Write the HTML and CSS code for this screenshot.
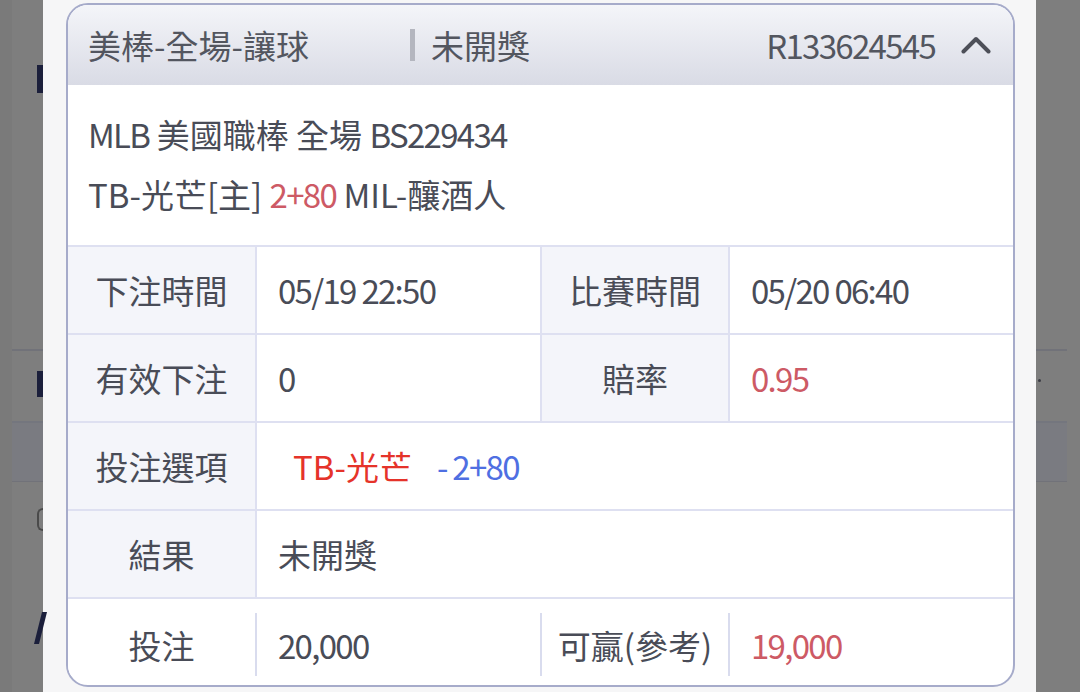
FILE: index.html
```html
<!DOCTYPE html>
<html lang="zh-Hant">
<head>
  <meta charset="UTF-8" />
  <meta name="viewport" content="width=device-width, initial-scale=1.0"/>
  <title>注單詳情</title>
  <link rel="stylesheet" href="styles.css">
</head>
<body>

  <div class="screen">
    <div class="dim dim-left">
      <i class="frag frag-a"></i>
      <i class="frag frag-b"></i>
      <i class="frag frag-c"></i>
      <i class="frag frag-d"></i>
    </div>

    <div class="sheet">
      <div class="card">
        <div class="card-head">
          <span class="title">美棒-全場-讓球</span>
          <span class="bar"></span>
          <span class="status">未開獎</span>
          <span class="order-no num">R133624545</span>
          <svg class="chev" viewBox="0 0 30 18" width="30" height="18">
            <polyline points="2.5,15.5 15,3 27.5,15.5" fill="none" stroke="#4d4f58" stroke-width="4" stroke-linecap="round" stroke-linejoin="round"/>
          </svg>
        </div>

        <div class="info">
          <p><span class="num">MLB</span> 美國職棒 全場 <span class="num">BS229434</span></p>
          <p>TB-光芒[主] <span class="red num">2+80</span> MIL-釀酒人</p>
        </div>

        <div class="row">
          <div class="lbl">下注時間</div>
          <div class="val num">05/19 22:50</div>
          <div class="lbl">比賽時間</div>
          <div class="val num">05/20 06:40</div>
        </div>

        <div class="row">
          <div class="lbl">有效下注</div>
          <div class="val num">0</div>
          <div class="lbl">賠率</div>
          <div class="val red num">0.95</div>
        </div>

        <div class="row">
          <div class="lbl">投注選項</div>
          <div class="val wide pick">
            <span class="team">TB-光芒</span>
            <span class="line num">- 2+80</span>
          </div>
        </div>

        <div class="row">
          <div class="lbl">結果</div>
          <div class="val wide">未開獎</div>
        </div>

        <div class="row last">
          <div class="lbl">投注</div>
          <div class="val num">20,000</div>
          <div class="lbl">可贏(參考)</div>
          <div class="val red num">19,000</div>
        </div>
      </div>
    </div>

    <div class="dim dim-right">
      <i class="frag frag-e"></i>
    </div>
  </div>

</body>
</html>
```

FILE: styles.css
```css
body {
  margin: 0;
  font-family: "Noto Sans CJK TC", "Noto Sans", sans-serif;
  color: #494c57;
  background: #7c7c7c;
}

.screen {
  display: flex;
  width: 1080px;
  height: 692px;
  overflow: hidden;
}

/* dimmed page behind the sheet */
.dim {
  position: relative;
  height: 100%;
  background:
    linear-gradient(#717279, #717279) 0 349px / 100% 2px no-repeat,
    linear-gradient(#74767e, #74767e) 0 421px / 100% 2px no-repeat,
    linear-gradient(#7a7b81, #7a7b81) 0 423px / 100% 58px no-repeat,
    linear-gradient(#717279, #717279) 0 480px / 100% 2px no-repeat,
    #7e7e7e;
}

.dim-left {
  width: 43px;
  background-color: #7e7e7e;
  box-shadow: inset 12px 0 0 #7a7a7a;
}

.dim-right {
  width: 44px;
  background-size: 31px 2px, 31px 2px, 31px 58px, 31px 2px;
}

.frag {
  position: absolute;
  display: block;
  background: #1b1f3b;
}

.frag-a { left: 37px; top: 65px; width: 6px; height: 28px; }
.frag-b { left: 37px; top: 371px; width: 6px; height: 26px; }
.frag-c { left: 37px; top: 508px; width: 6px; height: 23px; background: none; border: 2px solid #4a4a4a; border-right: none; border-radius: 6px 0 0 6px; box-sizing: border-box; }
.frag-d { left: 38px; top: 612px; width: 5px; height: 32px; transform: skewX(-14deg); }
.frag-e { left: 2px; top: 379px; width: 3px; height: 3px; border-radius: 50%; background: #3c3d45; }

.sheet {
  flex: 1;
  background: #f6f6f7;
  padding: 3px 21px 0 23px;
}

.card {
  background: #ffffff;
  border: 2px solid #a6abca;
  border-radius: 22px;
  overflow: hidden;
}

.card-head {
  display: flex;
  align-items: center;
  height: 80px;
  padding: 0 22px 0 20px;
  background: linear-gradient(#f4f5f9, #d9dbe5);
  font-size: 33px;
  color: #53565f;
}

.title {
  width: 322px;
}

.bar {
  width: 5px;
  height: 32px;
  background: #b4b6bf;
  margin-right: 16px;
}

.order-no {
  margin-left: auto;
}

.chev {
  margin-left: 26px;
}

/* condensed look for latin and digits */
.num {
  letter-spacing: -1.7px;
}

.info {
  padding: 19px 20px 21px;
  font-size: 33px;
}

.info p {
  margin: 0;
  line-height: 60px;
}

.red {
  color: #cd5a65;
}

.row {
  display: grid;
  grid-template-columns: 187px 285px 188px 1fr;
  height: 88px;
  box-sizing: border-box;
  border-top: 2px solid #dee0f1;
  font-size: 33px;
}

.lbl,
.val {
  display: flex;
  align-items: center;
  box-sizing: border-box;
}

.lbl {
  justify-content: center;
  background: #f4f5fa;
}

.val {
  padding-left: 21px;
}

.row > div + div {
  border-left: 2px solid #dee0f1;
}

.wide {
  grid-column: span 3;
}

.pick {
  padding-left: 36px;
}

.team {
  color: #e5332a;
}

.line {
  color: #4f6fe2;
  margin-left: 25px;
}

.row.last {
  height: 88px;
  padding: 14px 0 9px;
}

.row.last .lbl {
  background: #ffffff;
}

.row.last > div + div {
  border-left-color: #d9dcee;
}
```
